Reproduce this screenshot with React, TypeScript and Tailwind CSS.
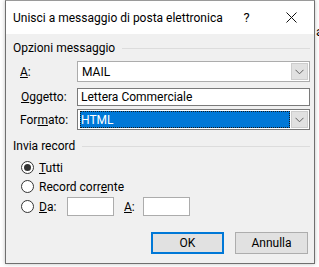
import React from "react";

// Mail merge dialog - Windows 10 style

const Chevron = () => (
  <svg width="9" height="6" viewBox="0 0 9 6" fill="none" stroke="#606060" strokeWidth="1">
    <path d="M0.5 0.8 L4.5 4.8 L8.5 0.8" />
  </svg>
);

const DropButton = () => (
  <div className="w-[17px] self-stretch m-px bg-[#e1e1e1] border border-[#cdcdcd] flex items-center justify-center">
    <Chevron />
  </div>
);

const GroupHeader = ({ label, className }: { label: string; className?: string }) => (
  <div className={"h-[14px] flex items-center " + (className ?? "")}>
    <span className="leading-none whitespace-nowrap">{label}</span>
    <div className="flex-1 h-px bg-[#dcdcdc] ml-[7px]" />
  </div>
);

const Radio = ({ checked }: { checked?: boolean }) => (
  <div className="w-[13px] h-[13px] rounded-full border border-[#333333] bg-white flex items-center justify-center">
    {checked && <div className="w-[7px] h-[7px] rounded-full bg-[#333333]" />}
  </div>
);

export default function App() {
  return (
    <div className="w-[319px] h-[267px] bg-white flex font-['Segoe_UI','Roboto',sans-serif] text-[12px] text-black overflow-hidden">
      <div className="w-[5px] shrink-0" />
      <div className="w-[310px] shrink-0 h-[264px] border border-[#6f6f6f] border-t-[#9a9a9a] flex flex-col shadow-[0_0_4px_rgba(0,0,0,0.25)]">
        {/* Title bar */}
        <div className="h-[33px] bg-white flex items-center">
          <span className="pl-[7px] whitespace-nowrap">Unisci a messaggio di posta elettronica</span>
          <div className="ml-auto flex h-full shrink-0">
            <div className="w-[45px] flex items-center justify-center text-[13px]">?</div>
            <div className="w-[45px] flex items-center justify-center">
              <svg width="11" height="11" viewBox="0 0 11 11" stroke="#111" strokeWidth="1">
                <path d="M0.5 0.5 L10.5 10.5 M10.5 0.5 L0.5 10.5" />
              </svg>
            </div>
          </div>
        </div>

        {/* Body */}
        <div className="flex-1 bg-[#f0f0f0] pl-[7px] pr-[4px] pt-[7px] flex flex-col">
          <GroupHeader label="Opzioni messaggio" />

          <div className="mt-[6px] h-[21px] flex items-center">
            <span className="w-[64px] pl-[7px]"><u>A</u>:</span>
            <div className="flex-1 h-full bg-white border border-[#acacac] flex items-center">
              <span className="pl-[4px] flex-1">MAIL</span>
              <DropButton />
            </div>
          </div>

          <div className="mt-[6px] h-[18px] flex items-center">
            <span className="w-[64px] pl-[8px]"><u>O</u>ggetto:</span>
            <div className="flex-1 h-full bg-white border border-[#7a7a7a] flex items-center">
              <span className="pl-[3px]">Lettera Commerciale</span>
            </div>
          </div>

          <div className="mt-[3px] h-[21px] flex items-center">
            <span className="w-[64px] pl-[7px]">For<u>m</u>ato:</span>
            <div className="flex-1 h-full bg-white border border-[#7a7a7a] flex items-center">
              <div className="flex-1 ml-[2px] h-[17px] bg-[#0078d7] outline-1 outline-dotted outline-[#1a1a1a] -outline-offset-1 text-white flex items-center">
                <span className="pl-[1px]">HTML</span>
              </div>
              <DropButton />
            </div>
          </div>

          <GroupHeader label="Invia record" className="mt-[9px]" />

          <div className="mt-[5px] h-[19px] flex items-center pl-[8px] gap-[5px]">
            <Radio checked />
            <span><u>T</u>utti</span>
          </div>
          <div className="h-[19px] flex items-center pl-[8px] gap-[5px]">
            <Radio />
            <span>Record corr<u>e</u>nte</span>
          </div>
          <div className="mt-px h-[19px] flex items-center pl-[8px]">
            <Radio />
            <span className="ml-[5px] w-[28px]"><u>D</u>a:</span>
            <div className="w-[47px] h-full bg-white border border-[#acacac]" />
            <span className="ml-[10px] w-[19px]"><u>A</u>:</span>
            <div className="w-[47px] h-full bg-white border border-[#acacac]" />
          </div>

          <div className="mt-[16px] flex justify-end gap-[11px] pr-[2px]">
            <button className="w-[73px] h-[22px] bg-[#e1e1e1] border-2 border-[#0078d7] flex items-center justify-center">
              OK
            </button>
            <button className="w-[73px] h-[22px] bg-[#e1e1e1] border border-[#adadad] flex items-center justify-center">
              Annulla
            </button>
          </div>
        </div>
      </div>
      <div className="w-[4px] shrink-0 overflow-hidden pt-[22px]">
        <span className="ml-[1px] text-[13px]">a</span>
      </div>
    </div>
  );
}
